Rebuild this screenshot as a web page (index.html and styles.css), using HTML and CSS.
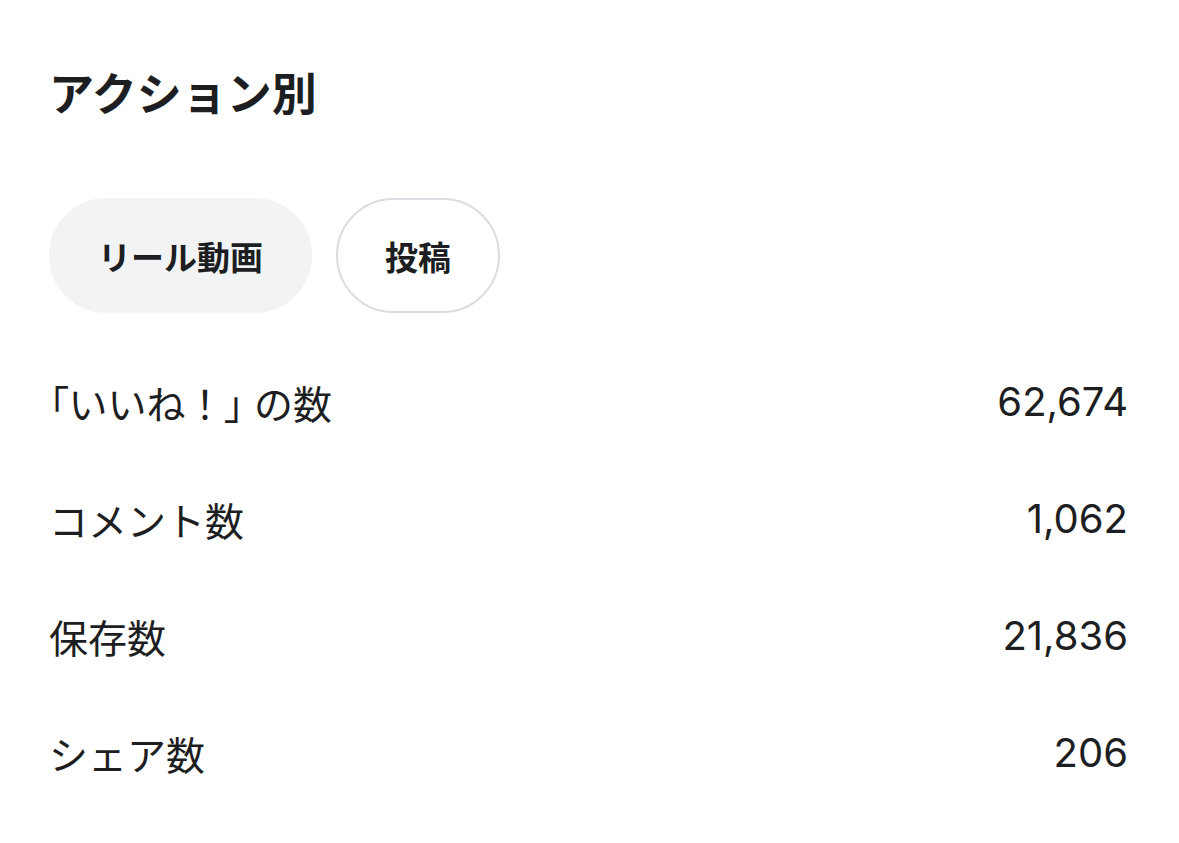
FILE: index.html
```html
<!DOCTYPE html>
<html lang="ja">
<head>
  <meta charset="UTF-8" />
  <meta name="viewport" content="width=device-width, initial-scale=1.0"/>
  <title>アクション別</title>
  <link rel="stylesheet" href="styles.css">
</head>
<body>
  <main class="panel">
    <h1 class="title">アクション別</h1>

    <div class="tabs">
      <button class="tab active">リール動画</button>
      <button class="tab">投稿</button>
    </div>

    <ul class="stats">
      <li class="stat"><span class="label"><span class="punct">「</span>いいね！<span class="punct close">」</span>の数</span><span class="value">62,674</span></li>
      <li class="stat"><span class="label">コメント数</span><span class="value">1,062</span></li>
      <li class="stat"><span class="label">保存数</span><span class="value">21,836</span></li>
      <li class="stat"><span class="label">シェア数</span><span class="value">206</span></li>
    </ul>
  </main>
</body>
</html>
```

FILE: styles.css
```css
body {
  margin: 0;
  background-color: #fff;
  color: #1c1e21;
  font-family: Inter, "Noto Sans CJK JP", sans-serif;
}
.panel {
  padding: 64px 51px 0 49px;
}
.title {
  margin: 0;
  font-size: 45px;
  line-height: 62px;
  font-weight: 700;
}
.tabs {
  display: flex;
  gap: 24px;
  margin-top: 72px;
}
.tab {
  height: 115px;
  padding: 0 47px;
  border: 2px solid #dadde1;
  border-radius: 58px;
  background-color: #fff;
  color: #1c1e21;
  font-family: inherit;
  font-size: 33px;
  font-weight: 700;
}
.tab.active {
  background-color: #f2f3f5;
  border-color: #f2f3f5;
}
.stats {
  list-style: none;
  margin: 30px 0 0;
  padding: 0;
}
.stat {
  display: flex;
  justify-content: space-between;
  align-items: center;
  height: 117px;
  font-size: 39px;
}
.punct {
  font-feature-settings: "palt";
}
.punct.close {
  margin-right: 10px;
}
.value {
  font-size: 40px;
}
```
